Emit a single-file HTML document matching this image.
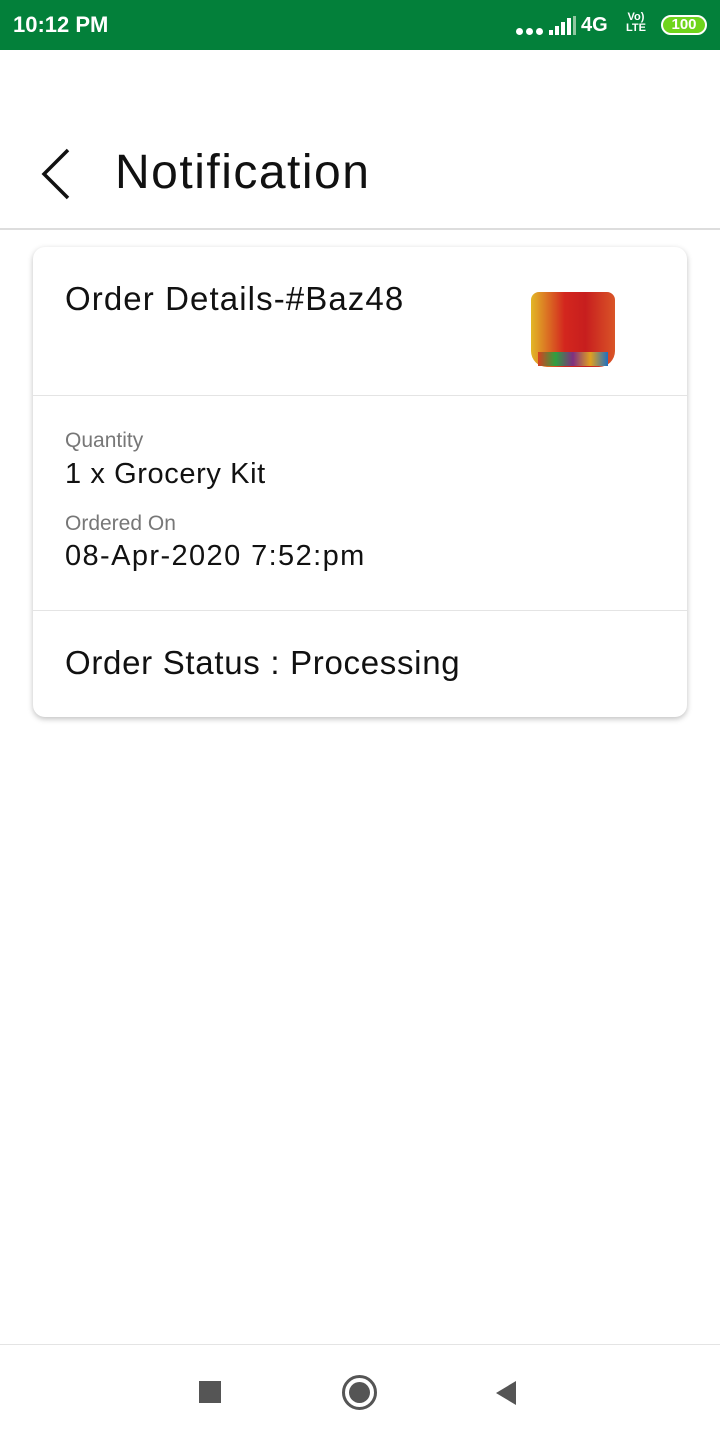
<!DOCTYPE html>
<html><head><meta charset="utf-8"><style>
*{margin:0;padding:0;box-sizing:border-box}
body{width:720px;height:1440px;position:relative;background:#fff;font-family:"Liberation Sans",sans-serif;overflow:hidden;color:#111}
.sb{position:absolute;top:0;left:0;width:720px;height:50px;background:#03803a;color:#fff}
.abs{position:absolute;white-space:nowrap}
.card{position:absolute;left:33px;top:247px;width:654px;height:470px;background:#fff;border-radius:12px;box-shadow:0 2px 6px rgba(0,0,0,.25)}
.hr{position:absolute;left:0;width:654px;height:1px;background:#e4e4e4}
</style></head><body>
<div class="sb">
<div class="abs" style="left:13px;top:12px;font-size:22px;font-weight:bold">10:12 PM</div>
<div class="abs" style="left:516px;top:28px;width:7px;height:7px;border-radius:50%;background:#fff;box-shadow:10px 0 #fff,20px 0 #fff"></div>
<svg class="abs" style="left:549px;top:16px" width="28" height="20"><rect x="0" y="14" width="4" height="5" fill="#fff"/><rect x="6" y="10" width="4" height="9" fill="#fff"/><rect x="12" y="6" width="4" height="13" fill="#fff"/><rect x="18" y="2" width="4" height="17" fill="#fff"/><rect x="24" y="0" width="3" height="19" fill="#8fc7a0"/></svg>
<div class="abs" style="left:581px;top:14px;font-size:20px;font-weight:bold">4G</div>
<div class="abs" style="left:626px;top:12px;font-size:11px;font-weight:bold;line-height:11px;text-align:center">Vo)<br>LTE</div>
<div class="abs" style="left:661px;top:15px;width:46px;height:20px;border:2px solid #fff;border-radius:10px;background:#6fd41c;font-size:15px;font-weight:bold;text-align:center;line-height:16px;color:#fff">100</div>
</div>
<svg class="abs" style="left:38px;top:148px" width="34" height="52"><path d="M30 2 L6 26 L30 50" stroke="#111" stroke-width="3.5" fill="none"/></svg>
<div class="abs" style="left:115px;top:145px;font-size:48px;letter-spacing:1.5px">Notification</div>
<div class="abs" style="left:0;top:228px;width:720px;height:2px;background:#ddd"></div>
<div class="card">
<div class="abs" style="left:32px;top:33px;font-size:33px;letter-spacing:1.1px">Order Details-#Baz48</div>
<div class="abs" style="left:498px;top:45px;width:84px;height:75px;border-radius:8px 8px 16px 16px;background:linear-gradient(90deg,rgba(230,200,40,.9),rgba(216,40,30,.8) 40%,rgba(200,30,30,.9) 65%,rgba(220,90,40,.9)),#c02020"></div>
<div class="abs" style="left:505px;top:105px;width:70px;height:14px;background:linear-gradient(90deg,#d84020,#30a040,#803080,#e0a020,#2070c0)"></div>
<div class="hr" style="top:148px"></div>
<div class="abs" style="left:32px;top:182px;font-size:21px;color:#777">Quantity</div>
<div class="abs" style="left:32px;top:211px;font-size:29px;letter-spacing:0.6px">1 x Grocery Kit</div>
<div class="abs" style="left:32px;top:265px;font-size:21px;color:#777">Ordered On</div>
<div class="abs" style="left:32px;top:293px;font-size:29px;letter-spacing:1.4px">08-Apr-2020 7:52:pm</div>
<div class="hr" style="top:363px"></div>
<div class="abs" style="left:32px;top:397px;font-size:33px;letter-spacing:0.7px">Order Status : Processing</div>
</div>
<div class="abs" style="left:0;top:1344px;width:720px;height:1px;background:#e4e4e4"></div>
<div class="abs" style="left:199px;top:1381px;width:22px;height:22px;background:#555"></div>
<div class="abs" style="left:342px;top:1375px;width:35px;height:35px;border:3px solid #555;border-radius:50%"></div>
<div class="abs" style="left:349px;top:1382px;width:21px;height:21px;background:#555;border-radius:50%"></div>
<svg class="abs" style="left:494px;top:1380px" width="24" height="26"><path d="M22 1 L2 13 L22 25Z" fill="#555"/></svg>
</body></html>
